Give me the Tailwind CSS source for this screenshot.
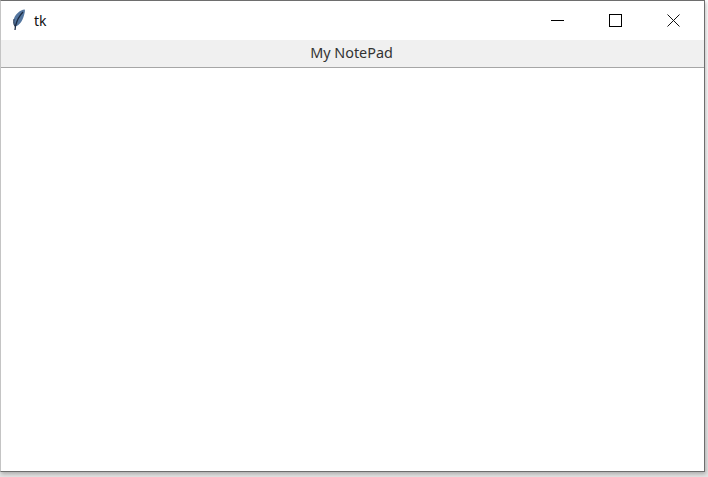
<!DOCTYPE html>
<html lang="en">
<head>
  <meta charset="UTF-8">
  <title>tk</title>
  <script src="https://cdn.jsdelivr.net/npm/@tailwindcss/browser@4"></script>
</head>
<body class="bg-white">
  <div class="w-[708px] h-[477px] overflow-hidden bg-gradient-to-b from-white to-[#e4e4e4] font-['Noto_Sans',sans-serif]">
    <div class="w-[705px] h-[472px] border border-[#6e6e6e] border-l-[#c4c4c4] bg-white flex flex-col shadow-[1px_2px_4px_rgba(0,0,0,0.25)]">
      <!-- title bar -->
      <div class="h-[39px] flex items-center shrink-0">
        <svg class="ml-[11px] mt-[-2px]" width="14" height="22" viewBox="0 0 14 22">
          <path d="M12.800 0.500C8 1 2.500 5.500 1.500 11.500C1.200 14 1.800 16 3 17.500C7.500 16.500 10.500 12 11.800 7C12.500 4.500 13.200 2.500 12.800 0.500Z" fill="#54769f"/>
          <path d="M11 3C8 6 5 11 3.500 17L3 21" fill="none" stroke="#1c2c44" stroke-width="1.300"/>
          <path d="M2 10C1.500 13 1.800 16 3 17.500" fill="none" stroke="#26344c" stroke-width="1"/>
        </svg>
        <span class="ml-[8px] text-[14px] leading-none text-[#111]">tk</span>
        <div class="ml-auto mr-[2px] flex items-center">
          <button class="w-[58px] h-[39px] flex items-center justify-center">
            <svg width="13" height="13" viewBox="0 0 13 13"><path d="M0 6.500H13" stroke="#000" stroke-width="1"/></svg>
          </button>
          <button class="w-[58px] h-[39px] flex items-center justify-center">
            <svg width="13" height="13" viewBox="0 0 13 13"><rect x="0.500" y="0.500" width="12" height="12" fill="none" stroke="#000" stroke-width="1"/></svg>
          </button>
          <button class="w-[58px] h-[39px] flex items-center justify-center">
            <svg width="13" height="13" viewBox="0 0 13 13"><path d="M0.500 0.500L12.500 12.500M12.500 0.500L0.500 12.500" stroke="#111" stroke-width="1"/></svg>
          </button>
        </div>
      </div>
      <!-- label -->
      <div class="h-[28px] shrink-0 bg-[#f0f0f0] border-b border-[#a6a6a6] flex items-center justify-center pr-[2px] text-[14.4px] leading-none text-[#333]">My NotePad</div>
      <!-- text area -->
      <div class="flex-1 bg-white"></div>
    </div>
  </div>
</body>
</html>
